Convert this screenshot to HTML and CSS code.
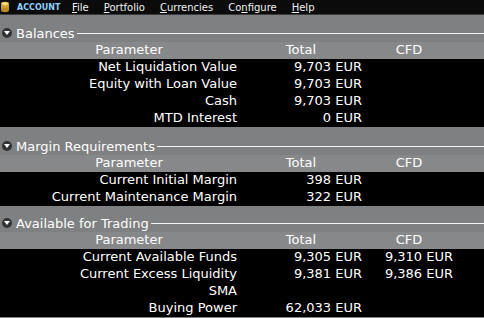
FILE: index.html
```html
<!DOCTYPE html>
<html>
<head>
<meta charset="utf-8">
<link rel="stylesheet" href="styles.css">
</head>
<body>
<div class="menubar">
  <svg class="logo" width="12" height="13" viewBox="0 0 12 13">
    <ellipse cx="5" cy="3" rx="4" ry="2.2" fill="#e8c34a"/>
    <rect x="1" y="3" width="8" height="6" fill="#c9a030"/>
    <ellipse cx="5" cy="9" rx="4" ry="2.2" fill="#b88a22"/>
    <ellipse cx="5" cy="3" rx="3" ry="1.4" fill="#f6de7a"/>
  </svg>
  <span class="brand">ACCOUNT</span>
  <span class="mi"><u>F</u>ile</span>
  <span class="mi"><u>P</u>ortfolio</span>
  <span class="mi"><u>C</u>urrencies</span>
  <span class="mi">Co<u>n</u>figure</span>
  <span class="mi"><u>H</u>elp</span>
</div>

<div class="section s1">
  <div class="title"><span class="tog"></span><span class="tt">Balances</span><span class="rule"></span></div>
  <div class="grid head"><div class="c1">Parameter</div><div class="c2">Total</div><div class="c3">CFD</div></div>
  <div class="grid body">
    <div class="c1">Net Liquidation Value</div><div class="c2">9,703 EUR</div><div class="c3"></div>
    <div class="c1">Equity with Loan Value</div><div class="c2">9,703 EUR</div><div class="c3"></div>
    <div class="c1">Cash</div><div class="c2">9,703 EUR</div><div class="c3"></div>
    <div class="c1">MTD Interest</div><div class="c2">0 EUR</div><div class="c3"></div>
  </div>
</div>

<div class="section s2">
  <div class="title"><span class="tog"></span><span class="tt">Margin Requirements</span><span class="rule"></span></div>
  <div class="grid head"><div class="c1">Parameter</div><div class="c2">Total</div><div class="c3">CFD</div></div>
  <div class="grid body">
    <div class="c1">Current Initial Margin</div><div class="c2">398 EUR</div><div class="c3"></div>
    <div class="c1">Current Maintenance Margin</div><div class="c2">322 EUR</div><div class="c3"></div>
  </div>
</div>

<div class="section s3">
  <div class="title"><span class="tog"></span><span class="tt">Available for Trading</span><span class="rule"></span></div>
  <div class="grid head"><div class="c1">Parameter</div><div class="c2">Total</div><div class="c3">CFD</div></div>
  <div class="grid body">
    <div class="c1">Current Available Funds</div><div class="c2">9,305 EUR</div><div class="c3">9,310 EUR</div>
    <div class="c1">Current Excess Liquidity</div><div class="c2">9,381 EUR</div><div class="c3">9,386 EUR</div>
    <div class="c1">SMA</div><div class="c2"></div><div class="c3"></div>
    <div class="c1">Buying Power</div><div class="c2">62,033 EUR</div><div class="c3"></div>
  </div>
</div>
</body>
</html>
```
FILE: styles.css
```css
html, body {
  margin: 0;
  padding: 0;
  background: #7f8081;
  width: 484px;
  height: 318px;
  overflow: hidden;
  font-family: "DejaVu Sans", Verdana, sans-serif;
  color: #fff;
}
.menubar {
  height: 14px;
  background: #0b0b0b;
  display: flex;
  align-items: center;
  font-size: 10px;
  border-bottom: 1px solid #3c3c3c;
}
.logo {
  margin-left: 0;
  flex: none;
}
.brand {
  color: #8fd0ff;
  font-size: 8px;
  font-weight: bold;
  margin-left: 5px;
  width: 55px;
}
.mi {
  margin-right: 15px;
  color: #f0f0f0;
}
.section.s1 {
  margin-top: 11px;
}
.section.s2 {
  margin-top: 12px;
}
.section.s3 {
  margin-top: 10px;
}
.title {
  display: flex;
  align-items: center;
  height: 14px;
  font-size: 13px;
}
.tog {
  width: 10px;
  height: 10px;
  border-radius: 50%;
  background: #333;
  margin-left: 2px;
  margin-right: 4px;
  position: relative;
  flex: none;
}
.tog::after {
  content: "";
  position: absolute;
  left: 2px;
  top: 3px;
  border-left: 3px solid transparent;
  border-right: 3px solid transparent;
  border-top: 4px solid #fff;
}
.tt {
  white-space: nowrap;
  margin-right: 2px;
}
.rule {
  flex: 1;
  height: 1px;
  background: #f4f4f4;
}
.grid {
  display: grid;
  grid-template-columns: 258px 110px 116px;
  font-size: 13px;
}
.grid > div {
  height: 17px;
  line-height: 15px;
  white-space: nowrap;
}
.head {
  background: #87888a;
  margin-top: 2px;
}
.head .c1 { text-align: center; }
.head .c2 { text-align: center; padding-right: 24px; }
.head .c3 { text-align: center; padding-right: 34px; }
.body {
  background: #000;
}
.body .c1 { text-align: right; padding-right: 21px; }
.body .c2 { text-align: right; padding-right: 6px; }
.body .c3 { text-align: right; padding-right: 31px; }
```
